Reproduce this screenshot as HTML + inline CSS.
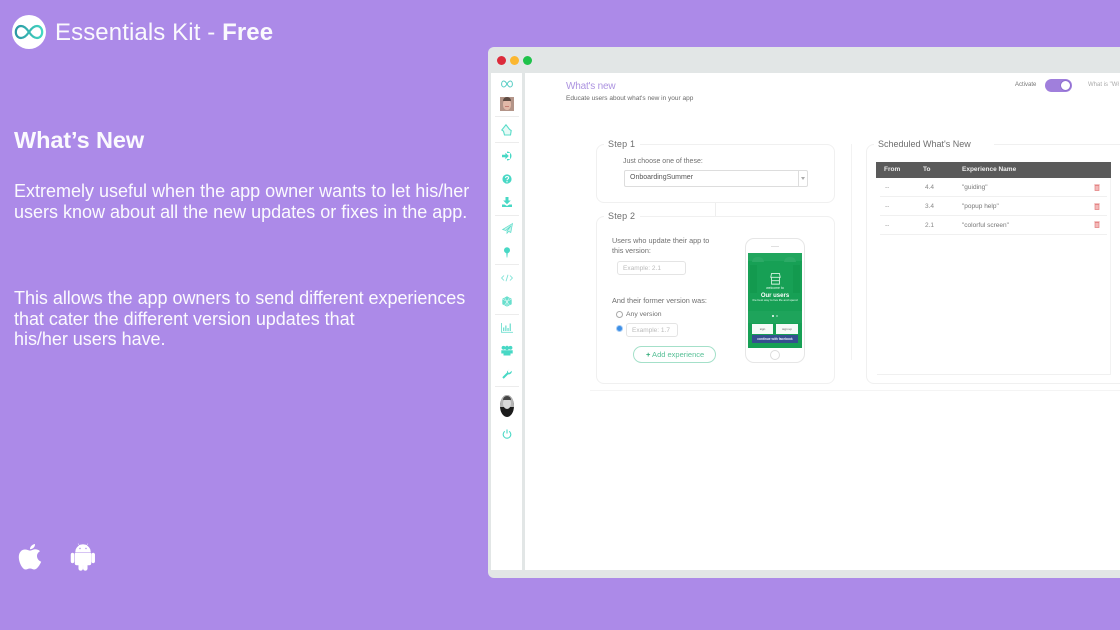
<!DOCTYPE html>
<html><head><meta charset="utf-8">
<style>
html,body{margin:0;padding:0;width:1120px;height:630px;overflow:hidden;background:#ac8ae8;font-family:"Liberation Sans",sans-serif}
.t{position:absolute;white-space:nowrap}
.b{position:absolute;box-sizing:border-box}
.w{color:#fff}
.sep{position:absolute;left:495px;width:24px;height:1px;background:#ececec}
.ln{position:absolute;height:1px;background:#f0f0f0}
svg{position:absolute;overflow:visible}
</style></head><body>
<!-- header -->
<div class="b" style="left:12px;top:15px;width:34px;height:34px;border-radius:50%;background:#fff"></div>
<svg style="left:12px;top:15px" width="34" height="34" viewBox="0 0 34 34"><defs><linearGradient id="g" x1="0" x2="1" y1="0" y2="0"><stop offset="0" stop-color="#2b96a3"/><stop offset="1" stop-color="#43d8c2"/></linearGradient></defs><path d="M17 17C14 12.500 11.500 11 9 11C5.800 11 3.800 13.800 3.800 17C3.800 20.200 5.800 23 9 23C11.500 23 14 21.500 17 17C20 12.500 22.500 11 25 11C28.200 11 30.200 13.800 30.200 17C30.200 20.200 28.200 23 25 23C22.500 23 20 21.500 17 17Z" fill="none" stroke="url(#g)" stroke-width="2.200"/></svg>
<div class="t w" style="left:55px;top:18px;font-size:24px;line-height:29px;letter-spacing:.1px;opacity:.95">Essentials Kit - <b>Free</b></div>

<!-- left copy -->
<div class="t w" style="left:14px;top:126px;font-size:23.500px;line-height:28px;font-weight:bold;letter-spacing:-.1px;opacity:.96">What’s New</div>
<div class="t w" style="left:14px;top:181px;font-size:18px;line-height:21px;opacity:.96">Extremely useful when the app owner wants to let his/her<br>users know about all the new updates or fixes in the app.</div>
<div class="t w" style="left:14px;top:288px;font-size:18px;line-height:20.500px;letter-spacing:-.03px;opacity:.96">This allows the app owners to send different experiences<br>that cater the different version updates that<br>his/her users have.</div>

<!-- platform icons -->
<svg style="left:18px;top:544px" width="24" height="26" viewBox="0 0 24 26"><path fill="#fff" d="M12 6.600C10.500 6.600 9 5.500 7 5.500C3.500 5.500 .8 8.500 .8 13C.8 18.500 4.500 25.500 7.600 25.500C9.200 25.500 10.200 24.500 12 24.500C13.800 24.500 14.700 25.500 16.400 25.500C19 25.500 21.800 21 23.200 17.800C20.500 16.600 19 14.500 19 12C19 9.800 20.200 8.200 22 7.200C20.700 5.700 18.800 5.200 17 5.200C15 5.200 13.500 6.600 12 6.600ZM12 5.200C11.900 2.800 14 .5 17 0C17.200 2.800 15 5.200 12 5.200Z"/></svg>
<svg style="left:71px;top:543px" width="24" height="27" viewBox="0 0 24 27"><path fill="#fff" d="M4.500 9A7.500 7.500 0 0 1 19.500 9ZM4 10H20V20.500A1.500 1.500 0 0 1 18.500 22H16.300V25.500A2 2 0 0 1 12.300 25.500V22H11.700V25.500A2 2 0 0 1 7.700 25.500V22H5.500A1.500 1.500 0 0 1 4 20.500ZM0 11.500A1.500 1.500 0 0 1 3 11.500V18.500A1.500 1.500 0 0 1 0 18.500ZM20.700 11.500A1.500 1.500 0 0 1 23.700 11.500V18.500A1.500 1.500 0 0 1 20.700 18.500ZM7 .5L9 3.500M17 .5L15 3.500" stroke="#fff" stroke-width=".5"/><circle cx="9" cy="5.500" r=".7" fill="#ac8ae8"/><circle cx="15" cy="5.500" r=".7" fill="#ac8ae8"/></svg>

<!-- window -->
<div class="b" style="left:488px;top:47px;width:640px;height:531px;background:#e2e6e6;border-radius:6px 0 0 6px"></div>
<div class="b" style="left:491px;top:73px;width:31px;height:497px;background:#fff"></div>
<div class="b" style="left:525px;top:73px;width:595px;height:497px;background:#fff"></div>
<div class="b" style="left:497px;top:56px;width:9px;height:9px;border-radius:50%;background:#dc2b3b"></div>
<div class="b" style="left:510px;top:56px;width:9px;height:9px;border-radius:50%;background:#fbb731"></div>
<div class="b" style="left:523px;top:56px;width:9px;height:9px;border-radius:50%;background:#1fc24b"></div>

<!-- sidebar -->
<svg style="left:501px;top:80px" width="12" height="8" viewBox="0 0 12 8"><path d="M6 4C4.800 2 3.800 1 2.800 1C1.500 1 .6 2.300 .6 4C.6 5.700 1.500 7 2.800 7C3.800 7 4.800 6 6 4C7.200 2 8.200 1 9.200 1C10.500 1 11.400 2.300 11.400 4C11.400 5.700 10.500 7 9.200 7C8.200 7 7.200 6 6 4Z" fill="none" stroke="#52cbc2" stroke-width="1"/></svg>
<div class="b" style="left:500px;top:97px;width:14px;height:14px;background:#b39488;overflow:hidden">
  <div class="b" style="left:3px;top:2px;width:8px;height:11px;border-radius:45%;background:#e2b9a8"></div>
  <div class="b" style="left:3px;top:0;width:8px;height:4px;border-radius:4px 4px 0 0;background:#5d4a42"></div>
  <div class="b" style="left:5px;top:9px;width:4px;height:1px;background:#c47d72"></div>
</div>
<div class="sep" style="top:116px"></div>
<svg style="left:501px;top:124px" width="11" height="12" viewBox="0 0 11 12"><path d="M5 .8L8.600 5.500L10.200 6.500L9.500 11H3.500L2.500 7.200L.8 6Z" fill="#e6faf6" stroke="#5adcc9" stroke-width="1.100"/></svg>
<div class="sep" style="top:142px"></div>
<svg style="left:502px;top:151px" width="10" height="10" viewBox="0 0 10 10"><path fill="#48d8c5" d="M5 .5A4.500 4.500 0 1 1 5 9.500V8H8V2H5ZM0 3.700H3.400V1.700L6.800 5L3.400 8.300V6.300H0Z"/></svg>
<svg style="left:502px;top:174px" width="10" height="10" viewBox="0 0 10 10"><circle cx="5" cy="5" r="4.600" fill="#48d8c5"/><path d="M3.500 3.900C3.500 2 6.700 2.200 6.700 3.800C6.700 5 5 4.900 5 6.200" fill="none" stroke="#fff" stroke-width="1.100"/><circle cx="5" cy="7.800" r=".7" fill="#fff"/></svg>
<svg style="left:502px;top:197px" width="10" height="10" viewBox="0 0 10 10"><path fill="#48d8c5" d="M3.500 0H6.500V3.500H8.800L5 7.300L1.200 3.500H3.500ZM0 7.500H2.500L5 9L7.500 7.500H10V10H0Z"/></svg>
<div class="sep" style="top:215px"></div>
<svg style="left:502px;top:223px" width="11" height="11" viewBox="0 0 11 11"><path d="M10.500 .5L.6 6.500L3.800 7.500L9 2.800L5 8L5 10.300L6.600 8.400L8.800 9.500Z" fill="#c9f3ec" stroke="#5adcc9" stroke-width=".7"/></svg>
<svg style="left:503px;top:247px" width="8" height="11" viewBox="0 0 8 11"><circle cx="4" cy="3.300" r="3" fill="#48d8c5"/><path d="M3.200 5H4.800L4.300 10.500H3.700Z" fill="#48d8c5"/></svg>
<div class="sep" style="top:264px"></div>
<svg style="left:501px;top:274px" width="12" height="8" viewBox="0 0 12 8"><path d="M3 1.500L.6 4L3 6.500M9 1.500L11.400 4L9 6.500M7 .8L5 7.200" fill="none" stroke="#7be2d5" stroke-width=".9"/></svg>
<svg style="left:502px;top:296px" width="10" height="11" viewBox="0 0 10 11"><path d="M5 .3L9.700 2.800V8.200L5 10.700L.3 8.200V2.800Z" fill="#68dfcd"/><path d="M.5 3L5 5.500L9.500 3M5 5.500V10.500M2.500 1.700L7.500 9.300M7.500 1.700L2.500 9.300" fill="none" stroke="#fff" stroke-width=".5"/></svg>
<div class="sep" style="top:314px"></div>
<svg style="left:501px;top:323px" width="12" height="10" viewBox="0 0 12 10"><path d="M2 8V4.500H3.300V8ZM4.200 8V2.500H5.500V8ZM6.400 8V5H7.700V8ZM8.600 8V.5H9.900V8Z" fill="#72dfd0"/><path d="M.5 0V9.300H12" fill="none" stroke="#72dfd0" stroke-width=".9"/></svg>
<svg style="left:501px;top:345px" width="12" height="11" viewBox="0 0 12 11"><circle cx="2.500" cy="2.800" r="1.900" fill="#48d8c5"/><circle cx="9.500" cy="2.800" r="1.900" fill="#48d8c5"/><circle cx="6" cy="3" r="2.200" fill="#48d8c5"/><path d="M.3 5.200H11.700V8.500H9.500V10.500H2.500V8.500H.3Z" fill="#48d8c5"/></svg>
<svg style="left:502px;top:369px" width="10" height="10" viewBox="0 0 10 10"><path d="M1 9L6 4" stroke="#48d8c5" stroke-width="2" fill="none"/><path d="M9.700 1.800A3 3 0 0 1 5.300 5L5 2.500L7.500 .2A3 3 0 0 0 6 3.500L7.500 3.700Z" fill="#48d8c5"/></svg>
<div class="sep" style="top:386px"></div>
<div class="b" style="left:500px;top:395px;width:14px;height:22px;border-radius:50%;background:#1c1c1c;overflow:hidden">
  <div class="b" style="left:0;top:0;width:14px;height:12px;background:#b5b5b5"></div>
  <div class="b" style="left:3px;top:3px;width:8px;height:11px;border-radius:50%;background:#d8d8d8"></div>
  <div class="b" style="left:3px;top:1px;width:8px;height:4px;border-radius:4px 4px 0 0;background:#444"></div>
</div>
<svg style="left:502px;top:429px" width="10" height="10" viewBox="0 0 10 10"><path d="M2.800 2.300A3.800 3.800 0 1 0 7.200 2.300M5 .5V4.500" fill="none" stroke="#48d8c5" stroke-width="1.100"/></svg>

<!-- content header -->
<div class="t" style="left:566px;top:80px;font-size:10px;line-height:13px;color:#ac93e0;letter-spacing:-.2px">What's new</div>
<div class="t" style="left:566px;top:94px;font-size:6.500px;line-height:10px;color:#6a6a6a">Educate users about what's new in your app</div>
<div class="t" style="left:1015px;top:81px;font-size:6px;line-height:8px;color:#777">Activate</div>
<div class="b" style="left:1045px;top:79px;width:27px;height:13px;border-radius:7px;background:#a07fdc"></div>
<div class="b" style="left:1060px;top:80px;width:11px;height:11px;border-radius:50%;background:#fff;border:1px solid #8f6fd0"></div>
<div class="t" style="left:1088px;top:81px;font-size:6px;line-height:8px;color:#aaa">What is "Wł</div>

<!-- step 1 -->
<div class="b" style="left:596px;top:144px;width:239px;height:59px;border:1px solid #f0f0f0;border-radius:8px"></div>
<div class="b" style="left:604px;top:138px;width:36px;height:12px;background:#fff"></div>
<div class="t" style="left:608px;top:138px;font-size:9px;line-height:12px;color:#6e6e6e;letter-spacing:.2px">Step 1</div>
<div class="t" style="left:623px;top:157px;font-size:7px;line-height:10px;color:#707070">Just choose one of these:</div>
<div class="b" style="left:624px;top:170px;width:184px;height:17px;border:1px solid #ddd;border-radius:2px"></div>
<div class="b" style="left:798px;top:170px;width:1px;height:17px;background:#ddd"></div>
<div class="t" style="left:630px;top:173px;font-size:7px;line-height:10px;color:#555">OnboardingSummer</div>
<div class="b" style="left:801px;top:177px;border-left:2px solid transparent;border-right:2px solid transparent;border-top:3px solid #aaa"></div>
<div class="b" style="left:715px;top:203px;width:1px;height:14px;background:#eee"></div>

<!-- step 2 -->
<div class="b" style="left:596px;top:216px;width:239px;height:168px;border:1px solid #f0f0f0;border-radius:8px"></div>
<div class="b" style="left:604px;top:210px;width:36px;height:12px;background:#fff"></div>
<div class="t" style="left:608px;top:210px;font-size:9px;line-height:12px;color:#6e6e6e;letter-spacing:.2px">Step 2</div>
<div class="t" style="left:612px;top:236px;font-size:7.300px;line-height:9.500px;color:#707070">Users who update their app to<br>this version:</div>
<div class="b" style="left:617px;top:261px;width:69px;height:14px;border:1px solid #e4e4e4;border-radius:3px"></div>
<div class="t" style="left:623px;top:264px;font-size:6.500px;line-height:9px;color:#bbb">Example: 2.1</div>
<div class="t" style="left:612px;top:296px;font-size:7.300px;line-height:10px;color:#707070">And their former version was:</div>
<div class="b" style="left:616px;top:311px;width:7px;height:7px;border:1px solid #aaa;border-radius:50%"></div>
<div class="t" style="left:626px;top:310px;font-size:6.800px;line-height:9px;color:#707070">Any version</div>
<div class="b" style="left:616px;top:325px;width:7px;height:7px;border-radius:50%;background:#3d8fe6;border:1.500px solid #a8cdf5"></div>
<div class="b" style="left:626px;top:323px;width:52px;height:14px;border:1px solid #e4e4e4;border-radius:3px"></div>
<div class="t" style="left:632px;top:326px;font-size:6.500px;line-height:9px;color:#bbb">Example: 1.7</div>
<div class="b" style="left:633px;top:346px;width:83px;height:17px;border:1px solid #a4e0c9;border-radius:9px"></div>
<div class="t" style="left:646px;top:350px;font-size:7.500px;line-height:10px;color:#58c097"><b style="color:#2aa873">+</b> Add experience</div>

<!-- phone -->
<div class="b" style="left:745px;top:238px;width:60px;height:125px;border:1px solid #e6e6e6;border-radius:9px;background:#fff"></div>
<div class="b" style="left:748px;top:253px;width:54px;height:95px;background:#17a055;overflow:hidden">
  <div class="b" style="left:0;top:0;width:54px;height:8px;background:#21a65e"></div>
  <div class="b" style="left:4px;top:4px;width:12px;height:5px;border-radius:6px 6px 0 0;background:#2caa66"></div>
  <div class="b" style="left:36px;top:4px;width:12px;height:5px;border-radius:6px 6px 0 0;background:#2caa66"></div>
  <div class="b" style="left:2px;top:12px;width:7px;height:28px;background:#139a4f"></div>
  <div class="b" style="left:45px;top:12px;width:7px;height:28px;background:#139a4f"></div>
  <div class="b" style="left:0;top:58px;width:54px;height:12px;background:#1ea45b"></div>
</div>
<svg style="left:770px;top:273px" width="11" height="12" viewBox="0 0 14 14" preserveAspectRatio="none"><path d="M2 .5H12L13 5H1ZM2 5H12V9H2ZM2 9H12V13H2Z" fill="none" stroke="#d8f2e3" stroke-width="1.100"/></svg>
<div class="t" style="left:748px;top:286px;width:54px;text-align:center;font-size:3.500px;line-height:4px;color:#eafff2">welcome to</div>
<div class="t" style="left:748px;top:293px;width:54px;text-align:center;font-size:6px;line-height:7px;font-weight:bold;color:#fff">Our users</div>
<div class="t" style="left:748px;top:298px;width:54px;text-align:center;font-size:3px;line-height:4px;color:#eafff2">the best way to live life and spend</div>
<div class="b" style="left:772px;top:315px;width:2px;height:2px;border-radius:50%;background:#fff"></div>
<div class="b" style="left:776px;top:315px;width:2px;height:2px;border-radius:50%;background:#7fd0a5"></div>
<div class="b" style="left:752px;top:324px;width:21px;height:10px;background:#f6fbf8"></div>
<div class="b" style="left:776px;top:324px;width:22px;height:10px;background:#f6fbf8"></div>
<div class="t" style="left:752px;top:327px;width:21px;text-align:center;font-size:3px;line-height:4px;color:#555">sign</div>
<div class="t" style="left:776px;top:327px;width:22px;text-align:center;font-size:3px;line-height:4px;color:#555">sign up</div>
<div class="b" style="left:752px;top:335px;width:46px;height:8px;background:#35508f"></div>
<div class="t" style="left:752px;top:337px;width:46px;text-align:center;font-size:3.200px;line-height:4px;font-weight:bold;color:#e8eefc">continue with facebook</div>
<div class="b" style="left:770px;top:350px;width:10px;height:10px;border:1px solid #dcdcdc;border-radius:50%"></div>
<div class="b" style="left:771px;top:246px;width:8px;height:1px;background:#e0e0e0"></div>

<div class="b" style="left:851px;top:144px;width:1px;height:216px;background:#f2f2f2"></div>

<!-- scheduled -->
<div class="b" style="left:866px;top:144px;width:270px;height:240px;border:1px solid #f0f0f0;border-radius:8px"></div>
<div class="b" style="left:874px;top:138px;width:120px;height:12px;background:#fff"></div>
<div class="t" style="left:878px;top:138px;font-size:9px;line-height:12px;color:#6e6e6e">Scheduled What's New</div>
<div class="b" style="left:876px;top:162px;width:235px;height:16px;background:#5a5a5a"></div>
<div class="t" style="left:884px;top:165px;font-size:6.500px;line-height:10px;font-weight:bold;color:#eee">From</div>
<div class="t" style="left:923px;top:165px;font-size:6.500px;line-height:10px;font-weight:bold;color:#eee">To</div>
<div class="t" style="left:962px;top:165px;font-size:6.500px;line-height:10px;font-weight:bold;color:#eee">Experience Name</div>
<div class="ln" style="left:880px;top:196px;width:227px"></div>
<div class="ln" style="left:880px;top:215px;width:227px"></div>
<div class="ln" style="left:880px;top:234px;width:227px"></div>
<div class="ln" style="left:877px;top:374px;width:233px"></div>
<div class="b" style="left:1110px;top:178px;width:1px;height:197px;background:#f2f2f2"></div>
<div class="t" style="left:885px;top:183px;font-size:6.500px;line-height:10px;color:#999">--</div>
<div class="t" style="left:925px;top:183px;font-size:6.500px;line-height:10px;color:#888">4.4</div>
<div class="t" style="left:962px;top:183px;font-size:6.500px;line-height:10px;color:#777">"guiding"</div>
<div class="t" style="left:885px;top:202px;font-size:6.500px;line-height:10px;color:#999">--</div>
<div class="t" style="left:925px;top:202px;font-size:6.500px;line-height:10px;color:#888">3.4</div>
<div class="t" style="left:962px;top:202px;font-size:6.500px;line-height:10px;color:#777">"popup help"</div>
<div class="t" style="left:885px;top:221px;font-size:6.500px;line-height:10px;color:#999">--</div>
<div class="t" style="left:925px;top:221px;font-size:6.500px;line-height:10px;color:#888">2.1</div>
<div class="t" style="left:962px;top:221px;font-size:6.500px;line-height:10px;color:#777">"colorful screen"</div>
<svg style="left:1094px;top:184px" width="6" height="7" viewBox="0 0 6 7"><path d="M.3 .8H5.700M1 1.500H5V6.500H1Z" fill="#f3b9b9" stroke="#e38080" stroke-width=".7"/></svg>
<svg style="left:1094px;top:203px" width="6" height="7" viewBox="0 0 6 7"><path d="M.3 .8H5.700M1 1.500H5V6.500H1Z" fill="#f3b9b9" stroke="#e38080" stroke-width=".7"/></svg>
<svg style="left:1094px;top:221px" width="6" height="7" viewBox="0 0 6 7"><path d="M.3 .8H5.700M1 1.500H5V6.500H1Z" fill="#f3b9b9" stroke="#e38080" stroke-width=".7"/></svg>
<div class="ln" style="left:590px;top:390px;width:530px;background:#f4f4f4"></div>
</body></html>
